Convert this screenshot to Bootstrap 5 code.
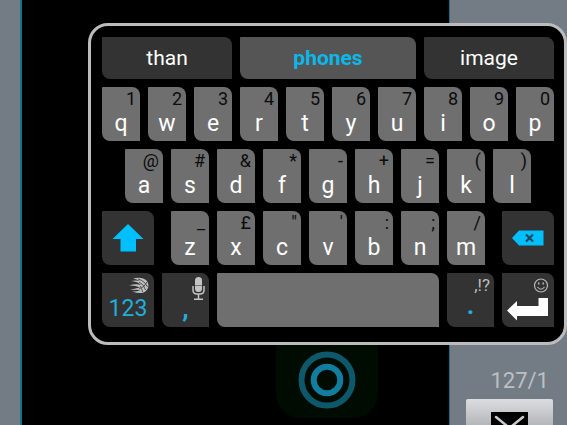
<!DOCTYPE html>
<html lang="en">
<head>
<meta charset="utf-8">
<meta name="viewport" content="width=device-width, initial-scale=1">
<title>Keyboard</title>
<link rel="stylesheet" href="https://cdn.jsdelivr.net/npm/bootstrap@5.3.0/dist/css/bootstrap.min.css">
<style>
body { font-family: Roboto, "Liberation Sans", sans-serif; background: #737b84; }
.gutter-left { width: 20px; }
.gutter-right { width: 117px; padding-right: 14px; }
.device { background: #000; border: solid #17708f; border-width: 0 1px 0 2px; }
.home-glow { width: 102px; height: 76px; margin-right: 71px; margin-bottom: 7px; background: #000b02; border-radius: 0 0 24px 24px; }
.counter { color: #bcc0c4; font-size: 22px; line-height: 26px; margin-right: 4px; }
.send { width: 87px; height: 26px; margin-top: 5px; padding-top: 13px; border-radius: 2px 2px 0 0; background: linear-gradient(#dcdddf, #b4b7ba); }
.keyboard { top: 23px; left: 88px; right: 0; padding: 11px 10px 15px 11px; gap: 8px; background: #000; border: 3px solid #bcbcbc; border-radius: 20px; }
.keyrow { gap: 8px; }
.key { flex: 38 1 0; min-width: 0; height: 54px; padding: 2px 0 0; color: #fff; background: #6f6f6f; border-radius: 1px 8px 0 8px; font-size: 23px; line-height: 30px; }
.hint { height: 20px; padding-right: 4px; color: #0c0c0c; font-size: 18px; line-height: 20px; }
.dark { background: #333; }
.w-side { flex-grow: 52; }
.w-punct { flex-grow: 47; }
.w-space { flex-grow: 222; }
.inset-row { padding: 0 23px; }
.after-shift { margin-left: 9px; }
.before-delete { margin-right: 9px; }
.word { flex: 130 1 0; height: 42px; color: #fff; background: #333; border-radius: 1px 8px 0 8px; font-size: 21px; line-height: 24px; }
.word-main { flex-grow: 176; background: #555; color: #0bb8ea; }
.cyan { color: #22addb; }
.light .hint { color: #bdbdbd; font-size: 17px; }
.numeric { line-height: 28px; }
.strong { font-size: 26px; line-height: 26px; }
.full-stop { font-size: 26px; line-height: 20px; }
</style>
<script src="https://cdn.jsdelivr.net/npm/bootstrap@5.3.0/dist/js/bootstrap.bundle.min.js"></script>
</head>
<body class="vh-100 overflow-hidden position-relative">
<div class="d-flex h-100">
  <div class="gutter-left flex-shrink-0"></div>
  <main class="device flex-grow-1 d-flex flex-column justify-content-end align-items-end">
    <button class="home-glow btn border-0 p-0 d-flex align-items-center justify-content-center" aria-label="Home">
      <svg width="60" height="60" viewBox="0 0 60 60" fill="none"><circle cx="30" cy="30" r="25.5" stroke="#0d586b" stroke-width="6"/><circle cx="30" cy="30" r="13.3" stroke="#117ea0" stroke-width="6"/></svg>
    </button>
  </main>
  <aside class="gutter-right flex-shrink-0 d-flex flex-column justify-content-end align-items-end">
    <div class="counter">127/1</div>
    <button class="send btn border-0 pb-0 overflow-hidden d-flex align-items-start justify-content-center" aria-label="Send message">
      <svg class="flex-shrink-0" width="37" height="13" viewBox="0 0 37 13"><path fill="#000" d="M0 0h37v13H0z"/><path d="M5 5 18.500 16 32 5" fill="none" stroke="#c9cbcd" stroke-width="2.500" stroke-linecap="round"/></svg>
    </button>
  </aside>
</div>

<section class="keyboard position-absolute d-flex flex-column" aria-label="Keyboard">
  <div class="keyrow d-flex">
    <button class="word btn border-0 p-0">than</button>
    <button class="word word-main btn border-0 p-0 fw-bold">phones</button>
    <button class="word btn border-0 p-0">image</button>
  </div>
  <div class="keyrow d-flex">
    <button class="key border-0 d-flex flex-column"><span class="hint w-100 text-end">1</span><span class="w-100 text-center">q</span></button>
    <button class="key border-0 d-flex flex-column"><span class="hint w-100 text-end">2</span><span class="w-100 text-center">w</span></button>
    <button class="key border-0 d-flex flex-column"><span class="hint w-100 text-end">3</span><span class="w-100 text-center">e</span></button>
    <button class="key border-0 d-flex flex-column"><span class="hint w-100 text-end">4</span><span class="w-100 text-center">r</span></button>
    <button class="key border-0 d-flex flex-column"><span class="hint w-100 text-end">5</span><span class="w-100 text-center">t</span></button>
    <button class="key border-0 d-flex flex-column"><span class="hint w-100 text-end">6</span><span class="w-100 text-center">y</span></button>
    <button class="key border-0 d-flex flex-column"><span class="hint w-100 text-end">7</span><span class="w-100 text-center">u</span></button>
    <button class="key border-0 d-flex flex-column"><span class="hint w-100 text-end">8</span><span class="w-100 text-center">i</span></button>
    <button class="key border-0 d-flex flex-column"><span class="hint w-100 text-end">9</span><span class="w-100 text-center">o</span></button>
    <button class="key border-0 d-flex flex-column"><span class="hint w-100 text-end">0</span><span class="w-100 text-center">p</span></button>
  </div>
  <div class="keyrow inset-row d-flex">
    <button class="key border-0 d-flex flex-column"><span class="hint w-100 text-end">@</span><span class="w-100 text-center">a</span></button>
    <button class="key border-0 d-flex flex-column"><span class="hint w-100 text-end">#</span><span class="w-100 text-center">s</span></button>
    <button class="key border-0 d-flex flex-column"><span class="hint w-100 text-end">&amp;</span><span class="w-100 text-center">d</span></button>
    <button class="key border-0 d-flex flex-column"><span class="hint w-100 text-end">*</span><span class="w-100 text-center">f</span></button>
    <button class="key border-0 d-flex flex-column"><span class="hint w-100 text-end">-</span><span class="w-100 text-center">g</span></button>
    <button class="key border-0 d-flex flex-column"><span class="hint w-100 text-end">+</span><span class="w-100 text-center">h</span></button>
    <button class="key border-0 d-flex flex-column"><span class="hint w-100 text-end">=</span><span class="w-100 text-center">j</span></button>
    <button class="key border-0 d-flex flex-column"><span class="hint w-100 text-end">(</span><span class="w-100 text-center">k</span></button>
    <button class="key border-0 d-flex flex-column"><span class="hint w-100 text-end">)</span><span class="w-100 text-center">l</span></button>
  </div>
  <div class="keyrow d-flex">
    <button class="key dark w-side border-0 p-0 d-flex align-items-center justify-content-center" aria-label="Shift">
      <svg width="32" height="28" viewBox="0 0 32 28"><path d="M16 0 31.500 15H24V27.500H8.500V15H.5Z" fill="#00bfff"/></svg>
    </button>
    <button class="key after-shift border-0 d-flex flex-column"><span class="hint w-100 text-end">_</span><span class="w-100 text-center">z</span></button>
    <button class="key border-0 d-flex flex-column"><span class="hint w-100 text-end">£</span><span class="w-100 text-center">x</span></button>
    <button class="key border-0 d-flex flex-column"><span class="hint w-100 text-end">"</span><span class="w-100 text-center">c</span></button>
    <button class="key border-0 d-flex flex-column"><span class="hint w-100 text-end">'</span><span class="w-100 text-center">v</span></button>
    <button class="key border-0 d-flex flex-column"><span class="hint w-100 text-end">:</span><span class="w-100 text-center">b</span></button>
    <button class="key border-0 d-flex flex-column"><span class="hint w-100 text-end">;</span><span class="w-100 text-center">n</span></button>
    <button class="key before-delete border-0 d-flex flex-column"><span class="hint w-100 text-end">/</span><span class="w-100 text-center">m</span></button>
    <button class="key dark w-side border-0 p-0 d-flex align-items-center justify-content-center" aria-label="Delete">
      <svg width="32" height="16" viewBox="0 0 32 16"><path d="M0 8 7 .5H31.500V15.500H7Z" fill="#00bfff"/><path d="m14 4.500 7 7m0-7-7 7" stroke="#1f4757" stroke-width="2.200"/></svg>
    </button>
  </div>
  <div class="keyrow d-flex">
    <button class="key dark light w-side border-0 d-flex flex-column">
      <span class="hint w-100 d-flex justify-content-end"><svg width="22" height="20" viewBox="0 0 22 20"><path d="M5 3.500Q13 1.500 18 5Q22 9 19.500 14Q17 18 13 18Q8 18 4 16.500Q10 16.500 12 15Q8 14.500 2 15Q8 13 12 12.500Q7 10 1 10.500Q8 8.500 13 10Q10 6.500 3 6Q8 5 12 6Q9 4 5 3.500Z" fill="#c0c0c0"/><path d="M10 4Q17 6 19.500 12M11 7Q16 9 17.500 15M12 11Q14 13 14.500 17M19 7Q17 12 11 14" fill="none" stroke="#444" stroke-width=".9"/></svg></span>
      <span class="numeric w-100 text-center cyan">123</span>
    </button>
    <button class="key dark light w-punct border-0 d-flex flex-column">
      <span class="hint w-100 d-flex justify-content-end"><svg class="flex-shrink-0" width="13" height="26" viewBox="0 0 13 26"><rect x="3" y="2" width="7" height="15" rx="3.500" fill="#c4c4c4"/><path d="M3 10.500h7" stroke="#777"/><path d="M1 11v4q0 4 4 4h3q4 0 4-4v-4M6.500 19v5M2 24.300h9" fill="none" stroke="#c4c4c4" stroke-width="1.500"/></svg></span>
      <span class="w-100 text-center cyan strong fw-bold">,</span>
    </button>
    <button class="key w-space border-0" aria-label="Space"></button>
    <button class="key dark light w-punct border-0 d-flex flex-column"><span class="hint w-100 text-end">,!?</span><span class="w-100 text-center cyan full-stop fw-bold">.</span></button>
    <button class="key dark light w-side border-0 d-flex flex-column" aria-label="Enter">
      <span class="hint w-100 d-flex justify-content-end"><svg width="18" height="20" viewBox="0 0 18 20" fill="none" stroke="#b8b8b8" stroke-width="1.200"><circle cx="9" cy="10.500" r="6.500"/><path d="M5.500 12q3.500 4.500 7 0"/><path d="M6.700 7.500v2M11.300 7.500v2" stroke-width="1.500"/></svg></span>
      <span class="w-100 d-flex justify-content-center"><svg width="42" height="26" viewBox="0 0 42 26"><path d="M0 15.500 10 6V11H31.500V3H41V21H10V25.500Z" fill="#fff"/></svg></span>
    </button>
  </div>
</section>
</body>
</html>
